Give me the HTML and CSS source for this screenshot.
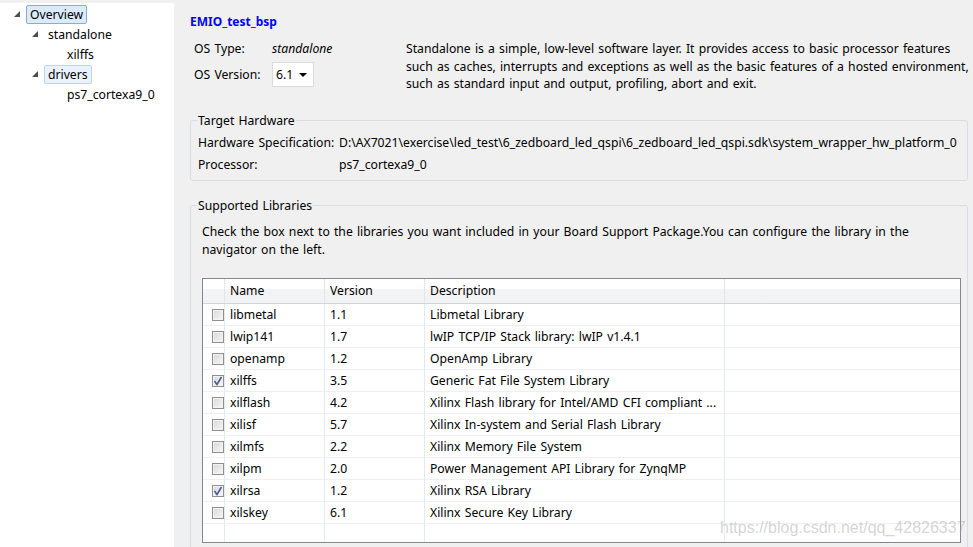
FILE: index.html
```html
<!DOCTYPE html>
<html>
<head>
<meta charset="utf-8">
<title>EMIO_test_bsp</title>
<link rel="stylesheet" href="styles.css">
</head>
<body>
<div class="app">
  <aside class="tree">
    <div class="node l0"><span class="tw"><svg width="6" height="6" viewBox="0 0 6 6"><polygon points="6,0 6,6 0,6" fill="#4d4d4d"/></svg></span><span class="lbl sel">Overview</span></div>
    <div class="node l1"><span class="tw"><svg width="6" height="6" viewBox="0 0 6 6"><polygon points="6,0 6,6 0,6" fill="#4d4d4d"/></svg></span><span class="lbl">standalone</span></div>
    <div class="node l2"><span class="lbl">xilffs</span></div>
    <div class="node l1"><span class="tw"><svg width="6" height="6" viewBox="0 0 6 6"><polygon points="6,0 6,6 0,6" fill="#4d4d4d"/></svg></span><span class="lbl sel2">drivers</span></div>
    <div class="node l2"><span class="lbl">ps7_cortexa9_0</span></div>
  </aside>

  <main class="main">
    <h1 class="title">EMIO_test_bsp</h1>
    <section class="os">
      <div class="os-left">
        <div class="os-row"><span class="os-label">OS Type:</span><span class="os-val">standalone</span></div>
        <div class="os-row2"><span class="os-label">OS Version:</span>
          <div class="select"><span>6.1</span><svg width="8" height="4" viewBox="0 0 8 4"><polygon points="0,0 8,0 4,4" fill="#000"/></svg></div>
        </div>
      </div>
      <p class="os-desc">Standalone is a simple, low-level software layer. It provides access to basic processor features such as caches, interrupts and exceptions as well as the basic features of a hosted environment, such as standard input and output, profiling, abort and exit.</p>
    </section>

    <fieldset class="group hw">
      <legend>Target Hardware</legend>
      <div class="hw-row"><span>Hardware Specification:</span><span class="clip">D:\AX7021\exercise\led_test\6_zedboard_led_qspi\6_zedboard_led_qspi.sdk\system_wrapper_hw_platform_0</span></div>
      <div class="hw-row"><span>Processor:</span><span>ps7_cortexa9_0</span></div>
    </fieldset>

    <fieldset class="group libs">
      <legend>Supported Libraries</legend>
      <p class="intro">Check the box next to the libraries you want included in your Board Support Package.You can configure the library in the navigator on the left.</p>
      <div class="lib-table">
        <div class="lib-head">
          <div class="hc"></div><div class="hc">Name</div><div class="hc">Version</div><div class="hc">Description</div><div class="hc last"></div>
        </div>
        <div class="lib-row"><div class="c ck"><span class="cb"></span></div><div class="c">libmetal</div><div class="c">1.1</div><div class="c">Libmetal Library</div><div class="c last"></div></div>
        <div class="lib-row"><div class="c ck"><span class="cb"></span></div><div class="c">lwip141</div><div class="c">1.7</div><div class="c">lwIP TCP/IP Stack library: lwIP v1.4.1</div><div class="c last"></div></div>
        <div class="lib-row"><div class="c ck"><span class="cb"></span></div><div class="c">openamp</div><div class="c">1.2</div><div class="c">OpenAmp Library</div><div class="c last"></div></div>
        <div class="lib-row"><div class="c ck"><span class="cb on"><svg width="10" height="10" viewBox="0 0 10 10"><path d="M1.5 5 L4 8.5 L8.5 1" fill="none" stroke="#4a5f97" stroke-width="1.6"/></svg></span></div><div class="c">xilffs</div><div class="c">3.5</div><div class="c">Generic Fat File System Library</div><div class="c last"></div></div>
        <div class="lib-row"><div class="c ck"><span class="cb"></span></div><div class="c">xilflash</div><div class="c">4.2</div><div class="c">Xilinx Flash library for Intel/AMD CFI compliant ...</div><div class="c last"></div></div>
        <div class="lib-row"><div class="c ck"><span class="cb"></span></div><div class="c">xilisf</div><div class="c">5.7</div><div class="c">Xilinx In-system and Serial Flash Library</div><div class="c last"></div></div>
        <div class="lib-row"><div class="c ck"><span class="cb"></span></div><div class="c">xilmfs</div><div class="c">2.2</div><div class="c">Xilinx Memory File System</div><div class="c last"></div></div>
        <div class="lib-row"><div class="c ck"><span class="cb"></span></div><div class="c">xilpm</div><div class="c">2.0</div><div class="c">Power Management API Library for ZynqMP</div><div class="c last"></div></div>
        <div class="lib-row"><div class="c ck"><span class="cb on"><svg width="10" height="10" viewBox="0 0 10 10"><path d="M1.5 5 L4 8.5 L8.5 1" fill="none" stroke="#4a5f97" stroke-width="1.6"/></svg></span></div><div class="c">xilrsa</div><div class="c">1.2</div><div class="c">Xilinx RSA Library</div><div class="c last"></div></div>
        <div class="lib-row"><div class="c ck"><span class="cb"></span></div><div class="c">xilskey</div><div class="c">6.1</div><div class="c">Xilinx Secure Key Library</div><div class="c last"></div></div>
        <div class="lib-fill"><div class="c"></div><div class="c"></div><div class="c"></div><div class="c"></div><div class="c last"></div></div>
      </div>
    </fieldset>
  </main>

  <div class="watermark">https://blog.csdn.net/qq_42826337</div>
</div>
</body>
</html>
```

FILE: styles.css
```css
html, body {
  margin: 0;
  padding: 0;
}
body {
  background: #f0f0f0;
  font-family: "Noto Sans", "Open Sans", sans-serif;
  font-size: 12.2px;
  word-spacing: 1px;
  line-height: 18px;
  color: #000;
  overflow: hidden;
}
.app {
  position: relative;
  display: flex;
  height: 547px;
  overflow: hidden;
}

/* tree */
.tree {
  width: 174px;
  flex: none;
  background: #fff;
  margin-top: 3px;
  padding-top: 1px;
  box-sizing: border-box;
}
.node {
  height: 20px;
  display: flex;
  align-items: center;
}
.l0 { padding-left: 14px; }
.l1 { padding-left: 32px; }
.l2 { padding-left: 63px; }
.tw {
  width: 12px;
  display: flex;
  align-items: center;
  margin-top: -1px;
}
.lbl {
  padding: 0 3px;
  border: 1px solid transparent;
  border-radius: 2px;
  line-height: 17px;
  white-space: nowrap;
}
.sel {
  background: #dcebfc;
  border-color: #84acdd;
}
.sel2 {
  background: #eaf3fd;
  border-color: #bcd5f3;
}

/* main */
.main {
  flex: 1;
  min-width: 0;
  padding: 13px 5px 0 16px;
}
.title {
  margin: 0;
  font-size: 12px;
  font-weight: bold;
  color: #0000ff;
  line-height: 18px;
  word-spacing: 0;
}
.os {
  display: grid;
  grid-template-columns: 216px 1fr;
  margin-top: 9px;
}
.os-left {
  padding-left: 4px;
}
.os-row {
  display: flex;
  align-items: center;
  height: 18px;
}
.os-row2 {
  display: flex;
  align-items: center;
  height: 25px;
  margin-top: 4px;
}
.os-label {
  width: 78px;
  flex: none;
}
.os-val {
  font-style: italic;
}
.select {
  width: 42px;
  height: 25px;
  box-sizing: border-box;
  background: #fff;
  border: 1px solid #dcdcdc;
  display: flex;
  align-items: center;
  justify-content: space-between;
  padding: 0 6px 0 3px;
}
.os-desc {
  margin: 0 -6px 0 0;
  line-height: 17.5px;
}

/* groups */
.group {
  margin: 20px 0 0;
  padding: 3px 6px 4px;
  border: 1px solid #d5dfe5;
  border-radius: 3px;
  min-width: 0;
}
.group legend {
  padding: 0 1px;
  line-height: 16px;
}
.hw-row {
  display: grid;
  grid-template-columns: 141px 1fr;
  height: 22px;
  align-items: center;
  padding-left: 1px;
  white-space: nowrap;
}
.hw-row span {
  overflow: hidden;
}
.libs {
  margin-top: 17px;
  padding-top: 9px;
  padding-bottom: 20px;
}
.intro {
  margin: 0;
  padding-left: 5px;
  line-height: 18px;
}

/* table */
.lib-table {
  margin: 19px 0 0 5px;
  border: 1px solid #828790;
  background: #fff;
}
.lib-head,
.lib-row,
.lib-fill {
  display: grid;
  grid-template-columns: 22px 100px 100px 300px 1fr;
}
.lib-head {
  height: 25px;
  box-sizing: border-box;
  border-bottom: 1px solid #d5d5d5;
  background: linear-gradient(#ffffff 0, #ffffff 40%, #f3f4f6 40%, #f1f2f4 100%);
}
.hc {
  border-right: 1px solid #e5e5e5;
  padding-left: 5px;
  line-height: 24px;
  white-space: nowrap;
}
.lib-row {
  height: 22px;
  box-sizing: border-box;
  border-bottom: 1px solid #eceff3;
}
.lib-fill {
  height: 18px;
}
.c {
  border-right: 1px solid #e3e9f2;
  padding-left: 5px;
  line-height: 21px;
  white-space: nowrap;
  overflow: hidden;
}
.hc.last,
.c.last {
  border-right: none;
}
.c.ck {
  padding-left: 9px;
  display: flex;
  align-items: center;
  padding-top: 2px;
  box-sizing: border-box;
}
.cb {
  width: 12px;
  height: 12px;
  box-sizing: border-box;
  border: 1px solid #8e8f8f;
  background: linear-gradient(135deg, #d8d8d8, #f7f7f7);
  box-shadow: inset 0 0 0 1px #f3f3f3;
  display: flex;
  align-items: center;
  justify-content: center;
}
.cb svg {
  display: block;
}

.watermark {
  position: absolute;
  left: 720px;
  top: 518px;
  font-family: "Liberation Sans", Arial, sans-serif;
  font-size: 16px;
  line-height: 20px;
  word-spacing: 0;
  color: rgba(160, 160, 160, 0.45);
  white-space: nowrap;
  pointer-events: none;
}
```
